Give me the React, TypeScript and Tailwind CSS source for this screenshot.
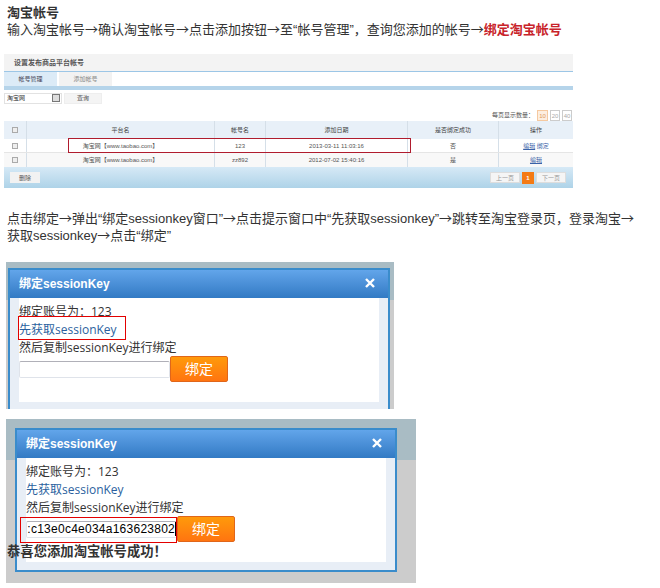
const font = "font-['Liberation_Sans','Noto_Sans_CJK_SC',sans-serif]";

function Arrow() {
  return <span className="font-['Noto_Sans_CJK_SC',sans-serif]">→</span>;
}

function Dialog({ filled }: { filled?: boolean }) {
  return (
    <div className="w-[382px] border-2 border-[#3a8ccb] bg-[#e8eef6]">
      <div className="h-[28px] bg-gradient-to-b from-[#62a5ea] to-[#327ac4] flex items-center justify-between pl-[9px] pr-[12px] text-white text-[12px] font-bold">
        <span>绑定sessionKey</span>
        <svg width="12" height="12" viewBox="0 0 12 12" className="mt-[-2px]">
          <path d="M2 2L10 10M10 2L2 10" stroke="#fff" strokeWidth="2.4" />
        </svg>
      </div>
      <div className="mx-[9px] mb-[8px] h-[104px] bg-white pt-[5px] text-[12px] leading-[18px] text-[#333] font-['Open_Sans','Noto_Sans_CJK_SC',sans-serif]">
        <div>绑定账号为：123</div>
        <div className="text-[#2a5f9e]">先获取sessionKey</div>
        <div>然后复制sessionKey进行绑定</div>
        <div className="flex items-center mt-[-1px]">
          <div className="w-[151px] h-[17px] rounded-[2px] border border-[#dfe3ea] border-t-[#b0b0b8] flex justify-end items-center text-black text-[12px] tracking-[0.25px] whitespace-nowrap font-['Liberation_Sans',sans-serif]">
            {filled && <span className="border-r border-black leading-[14px]">:c13e0c4e034a163623802</span>}
          </div>
          <div className="w-[58px] h-[26px] rounded-[2px] border border-[#e0661a] bg-gradient-to-b from-[#ff9a0a] to-[#ff7410] text-white text-[14px] flex items-center justify-center">
            绑定
          </div>
        </div>
      </div>
    </div>
  );
}

function Mock() {
  const th = "flex items-center justify-center border-r border-[#d5dfe8]";
  const cols = "grid grid-cols-[23px_188px_51px_142px_91px_1fr]";
  return (
    <div className="ml-[4px] w-[569px] h-[134px] text-[6px] leading-[8px] text-[#555] flex flex-col">
      <div className="h-[17px] bg-[#f3f3f3] flex items-center pl-[10px] text-[7px] font-bold text-[#555]">设置发布商品平台帐号</div>
      <div className="h-[15px] border-t border-[#9cc6e6] flex">
        <div className="w-[53px] bg-[#dcebf7] flex items-center justify-center text-[#445]">帐号管理</div>
        <div className="ml-[2px] w-[53px] bg-[#f2f2f2] flex items-center justify-center text-[#888]">添加帐号</div>
      </div>
      <div className="h-[4px] bg-[#b5d4ea]" />
      <div className="mt-[1px] h-[14px] flex items-center">
        <div className="w-[58px] h-[11px] border border-[#e2e2e2] flex items-center justify-between pl-[2px] pr-[1px] text-[#333]">
          淘宝网
          <span className="w-[8px] h-[8px] bg-[#ddd] border border-[#777]" />
        </div>
        <div className="ml-[2px] w-[38px] h-[11px] bg-[#f4f4f4] border border-[#eee] flex items-center justify-center">查询</div>
      </div>
      <div className="h-[16px] flex items-end justify-end pr-[1px] gap-[2px] relative z-10 mb-[-1px]">
        <span className="mr-[1px] self-center mt-[3px]">每页显示数量：</span>
        <span className="w-[11px] h-[11px] border border-[#f5c9a0] bg-[#fdeee0] text-[#e09a60] flex items-center justify-center">10</span>
        <span className="w-[10px] h-[11px] border border-[#ccc] bg-white text-[#aaa] flex items-center justify-center">20</span>
        <span className="w-[10px] h-[11px] border border-[#ccc] bg-white text-[#aaa] flex items-center justify-center">40</span>
      </div>
      <div className="relative mt-[1px]">
        <div className={`${cols} h-[18px] bg-[#e8f0f8] text-[#444]`}>
          <div className={th}><span className="w-[6px] h-[6px] border border-[#aaa] bg-[#eee]" /></div>
          <div className={th}>平台名</div>
          <div className={th}>帐号名</div>
          <div className={th}>添加日期</div>
          <div className={th}>是否绑定成功</div>
          <div className="flex items-center justify-center">操作</div>
        </div>
        <div className={`${cols} h-[14px] bg-white border-b border-[#e5e5e5]`}>
          <div className={th}><span className="w-[6px] h-[6px] border border-[#aaa] bg-[#eee]" /></div>
          <div className={th}>淘宝网【www.taobao.com】</div>
          <div className={th}>123</div>
          <div className={th}>2013-03-11 11:03:16</div>
          <div className={th}>否</div>
          <div className="flex items-center justify-center text-[#3a62a8]"><span className="underline">编辑</span>&nbsp;<span>绑定</span></div>
        </div>
        <div className={`${cols} h-[14px] bg-[#f8f8f8]`}>
          <div className={th}><span className="w-[6px] h-[6px] border border-[#aaa] bg-[#eee]" /></div>
          <div className={th}>淘宝网【www.taobao.com】</div>
          <div className={th}>zz892</div>
          <div className={th}>2012-07-02 15:40:16</div>
          <div className={th}>是</div>
          <div className="flex items-center justify-center text-[#3a62a8] underline">编辑</div>
        </div>
        <div className="absolute left-[64px] top-[17px] w-[343px] h-[15px] border border-[#b01c2e]" />
      </div>
      <div className="h-[21px] bg-gradient-to-b from-[#d6e9f6] to-[#aed3e8] flex items-center justify-between pl-[6px] pr-[7px]">
        <div className="w-[30px] h-[11px] bg-[#f2f2f2] flex items-center justify-center">删除</div>
        <div className="flex items-center gap-[2px] text-[#999]">
          <div className="w-[30px] h-[11px] bg-[#f5f5f5] border border-[#ddd] flex items-center justify-center">上一页</div>
          <div className="w-[12px] h-[12px] bg-[#f47a14] text-white font-bold flex items-center justify-center">1</div>
          <div className="w-[30px] h-[11px] bg-[#f5f5f5] border border-[#ddd] flex items-center justify-center">下一页</div>
        </div>
      </div>
    </div>
  );
}

export default function App() {
  return (
    <div className={`${font} relative w-[660px] h-[588px] bg-white overflow-hidden text-[13px] leading-[16px] text-[#333]`}>
      <div className="pl-[7px] pt-[5px]">
        <div className="font-bold">淘宝帐号</div>
        <div>
          输入淘宝帐号<Arrow />确认淘宝帐号<Arrow />点击添加按钮<Arrow />至“帐号管理”，查询您添加的帐号<Arrow /><span className="font-bold text-[#c8232a]">绑定淘宝帐号</span>
        </div>
      </div>

      <div className="mt-[16px]"><Mock /></div>

      <div className="ml-[7px] mt-[22px] w-[635px]">
        点击绑定<Arrow />弹出“绑定sessionkey窗口”<Arrow />点击提示窗口中“先获取sessionkey”<Arrow />跳转至淘宝登录页，登录淘宝<Arrow />获取sessionkey<Arrow />点击“绑定”
      </div>

      <div className="relative ml-[6px] mt-[18px] w-[388px] h-[147px] bg-gradient-to-b from-[#a9bcc4] from-[26%] to-[#cccccc] to-[26%] pl-[2px] pt-[6px] overflow-hidden">
        <Dialog />
        <div className="absolute left-[12px] top-[54px] w-[108px] h-[24px] border border-[#e30000]" />
      </div>

      <div className="relative ml-[6px] mt-[10px] w-[410px] h-[164px] bg-gradient-to-b from-[#a9bcc4] from-[25%] to-[#cccccc] to-[25%] pl-[9px] pt-[9px]">
        <Dialog filled />
        <div className="absolute left-[14px] top-[98px] w-[157px] h-[26px] border border-[#e30000]" />
        <div className="absolute left-[1px] top-[125px] text-[13.33px] font-bold text-[#333] whitespace-nowrap">
          恭喜您添加淘宝帐号成功！
        </div>
      </div>
    </div>
  );
}
